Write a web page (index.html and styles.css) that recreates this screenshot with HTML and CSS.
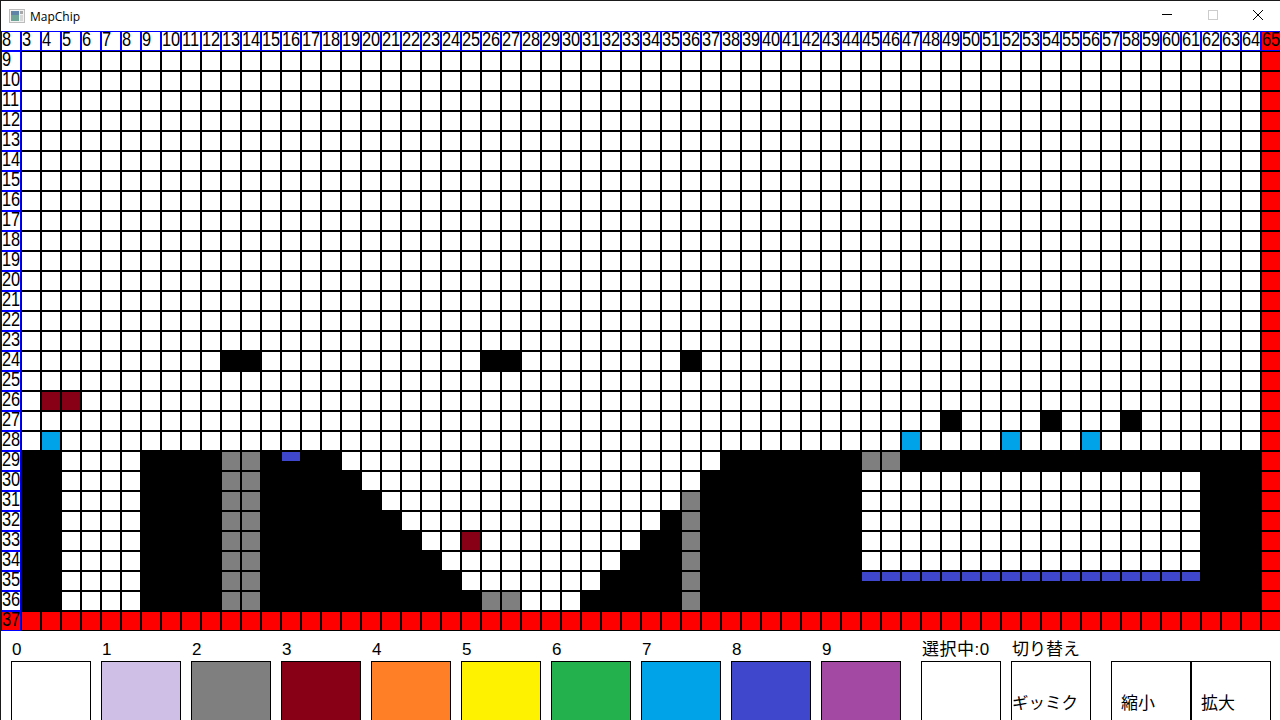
FILE: index.html
```html
<!DOCTYPE html>
<html lang="ja">
  <head>
    <meta charset="UTF-8" />
    <title>MapChip</title>
    <link rel="stylesheet" href="styles.css">
  </head>

  <body>
    <div class="window">
      <div class="titlebar">
        <svg class="app-icon" width="16" height="16" viewBox="0 0 16 16">
          <rect x="0.5" y="1.5" width="15" height="13" fill="#f2f2f2" stroke="#bcbcbc" />
          <rect x="2" y="3" width="8" height="10" fill="#6fa596" />
          <rect x="2" y="3" width="8" height="4" fill="#5f84a8" />
          <rect x="11" y="3" width="3" height="3" fill="#a8a8a8" />
          <rect x="11" y="7" width="3" height="6" fill="#d6d6d6" />
        </svg>
        <span class="title">MapChip</span>
        <div class="controls">
          <span class="control">
            <svg width="10" height="10" viewBox="0 0 10 10"><path d="M0 4.5H10" stroke="#000" fill="none" /></svg>
          </span>
          <span class="control">
            <svg width="10" height="10" viewBox="0 0 10 10"><rect x="0.5" y="0.5" width="9" height="9" stroke="#ccc" fill="none" /></svg>
          </span>
          <span class="control">
            <svg width="10" height="10" viewBox="0 0 10 10"><path d="M0 0L10 10M10 0L0 10" stroke="#000" fill="none" /></svg>
          </span>
        </div>
      </div>

      <div id="map" class="map"></div>

      <div class="palette">
        <div class="chip"><span class="chip-name">0</span><div class="swatch c0"></div></div>
        <div class="chip"><span class="chip-name">1</span><div class="swatch c1"></div></div>
        <div class="chip"><span class="chip-name">2</span><div class="swatch c2"></div></div>
        <div class="chip"><span class="chip-name">3</span><div class="swatch c3"></div></div>
        <div class="chip"><span class="chip-name">4</span><div class="swatch c4"></div></div>
        <div class="chip"><span class="chip-name">5</span><div class="swatch c5"></div></div>
        <div class="chip"><span class="chip-name">6</span><div class="swatch c6"></div></div>
        <div class="chip"><span class="chip-name">7</span><div class="swatch c7"></div></div>
        <div class="chip"><span class="chip-name">8</span><div class="swatch c8"></div></div>
        <div class="chip"><span class="chip-name">9</span><div class="swatch c9"></div></div>
        <div class="chip selected"><span class="chip-name">選択中:0</span><div class="swatch"></div></div>
        <div class="chip toggle"><span class="chip-name">切り替え</span><div class="swatch btn">ギッミク</div></div>
        <div class="zoom-btns">
          <div class="swatch btn zoom-btn">縮小</div>
          <div class="swatch btn zoom-btn">拡大</div>
        </div>
      </div>
    </div>

    <script src="map.js"></script>
  </body>
</html>
```

FILE: styles.css
```css
* {
  margin: 0;
  padding: 0;
  box-sizing: border-box;
}

body {
  background: #ffffff;
  overflow: hidden;
}

.window {
  width: 1280px;
  height: 720px;
  border-top: 1px solid #1a1a1a;
  border-left: 1px solid #1a1a1a;
  overflow: hidden;
  background: #ffffff;
}

.titlebar {
  display: flex;
  align-items: center;
  height: 30px;
  padding-left: 8px;
}

.app-icon {
  margin-right: 5px;
}

.title {
  font-family: "Open Sans", "Noto Sans", sans-serif;
  font-size: 12px;
  color: #000000;
}

.controls {
  display: flex;
  margin-left: auto;
  margin-right: -1px;
}

.control {
  display: flex;
  align-items: center;
  justify-content: center;
  width: 45.5px;
  height: 30px;
  padding-bottom: 2px;
}

/* map */
.map {
  display: grid;
  grid-template-columns: repeat(64, 20px);
  grid-auto-rows: 20px;
  width: 1280px;
}

.cell {
  border: 1px solid #000000;
  background: #ffffff;
  color: #000000;
}

.num {
  display: block;
  font-family: "Liberation Sans", sans-serif;
  font-size: 20px;
  line-height: 15px;
  white-space: nowrap;
  transform: scaleX(0.82);
  transform-origin: left top;
}

.cell.head {
  border-color: #0000ff;
}

.cell.black {
  background: #000000;
}

.cell.gray {
  background: #7f7f7f;
}

.cell.maroon {
  background: #880015;
}

.cell.cyan {
  background: #00a2e8;
}

.cell.red {
  background: #ff0000;
}

.cell.half {
  background: linear-gradient(#3f48cc 9px, #000000 9px);
}

/* palette */
.palette {
  display: flex;
  padding-left: 10px;
  padding-top: 10px;
  font-family: "Liberation Sans", "Noto Sans CJK JP", sans-serif;
  font-size: 17px;
  color: #000000;
}

.chip {
  width: 80px;
  margin-right: 10px;
}

.chip-name {
  display: block;
  height: 20px;
  line-height: 18px;
  padding-left: 1px;
  white-space: nowrap;
}

.swatch {
  width: 80px;
  height: 80px;
  border: 1px solid #000000;
  background: #ffffff;
}

.selected {
  margin-left: 10px;
  letter-spacing: 0.5px;
}

.btn {
  font-family: "Noto Sans CJK JP", sans-serif;
  line-height: 20px;
  padding-top: 30px;
  white-space: nowrap;
}

.toggle {
  margin-right: 20px;
}

.toggle .btn {
  font-size: 16.5px;
}

.zoom-btns {
  display: flex;
  padding-top: 20px;
}

.zoom-btn {
  padding-left: 9px;
}

.c0 { background: #ffffff; }
.c1 { background: #cfbfe7; }
.c2 { background: #7f7f7f; }
.c3 { background: #880015; }
.c4 { background: #ff7f27; }
.c5 { background: #fff200; }
.c6 { background: #22b14c; }
.c7 { background: #00a2e8; }
.c8 { background: #3f48cc; }
.c9 { background: #a349a4; }
```

FILE: map.js
```js
var COLS = 64;
var ROWS = 30;
var map = document.getElementById("map");
var cells = [];

for (var r = 0; r < ROWS; r++) {
  cells[r] = [];
  for (var c = 0; c < COLS; c++) {
    var cell = document.createElement("div");
    cell.className = "cell";
    map.appendChild(cell);
    cells[r][c] = cell;
  }
}

//r = row label - 8, c = column label - 2
function fill(label, from, to, name) {
  for (var c = from; c <= to; c++) {
    cells[label - 8][c].className = "cell " + name;
  }
}

function setNum(cell, n) {
  var num = document.createElement("span");
  num.className = "num";
  num.textContent = n;
  cell.className = "cell head";
  cell.appendChild(num);
}

//headers
for (var c = 0; c < COLS; c++) {
  setNum(cells[0][c], c == 0 ? 8 : c + 2);
}
for (var r = 1; r < ROWS; r++) {
  setNum(cells[r][0], r + 8);
}

//outer walls
cells[0][63].className = "cell head red";
cells[29][0].className = "cell head red";
for (var r = 1; r < ROWS; r++) {
  cells[r][63].className = "cell red";
}
fill(37, 1, 63, "red");

//blocks in the air
fill(24, 11, 12, "black");
fill(24, 24, 25, "black");
fill(24, 34, 34, "black");
fill(26, 2, 3, "maroon");
fill(27, 47, 47, "black");
fill(27, 52, 52, "black");
fill(27, 56, 56, "black");
fill(28, 2, 2, "cyan");
fill(28, 45, 45, "cyan");
fill(28, 50, 50, "cyan");
fill(28, 54, 54, "cyan");

//ground: [first white, last white] of the pit per row
var pit = {
  29: [17, 35],
  30: [18, 34],
  31: [19, 33],
  32: [20, 32],
  33: [21, 31],
  34: [22, 30],
  35: [23, 29],
  36: [24, 28]
};
for (var label = 29; label <= 36; label++) {
  fill(label, 1, 2, "black");
  fill(label, 7, 10, "black");
  fill(label, 11, 12, "gray");
  fill(label, 13, pit[label][0] - 1, "black");
  fill(label, pit[label][1] + 1, 62, "black");
  if (label >= 31) {
    fill(label, 34, 34, "gray");
  }
}
fill(29, 14, 14, "half");
fill(29, 43, 44, "gray");
fill(33, 23, 23, "maroon");
fill(36, 24, 25, "gray");

//room on the right
for (var label = 30; label <= 34; label++) {
  fill(label, 43, 59, "white");
}
fill(35, 43, 59, "half");
```
